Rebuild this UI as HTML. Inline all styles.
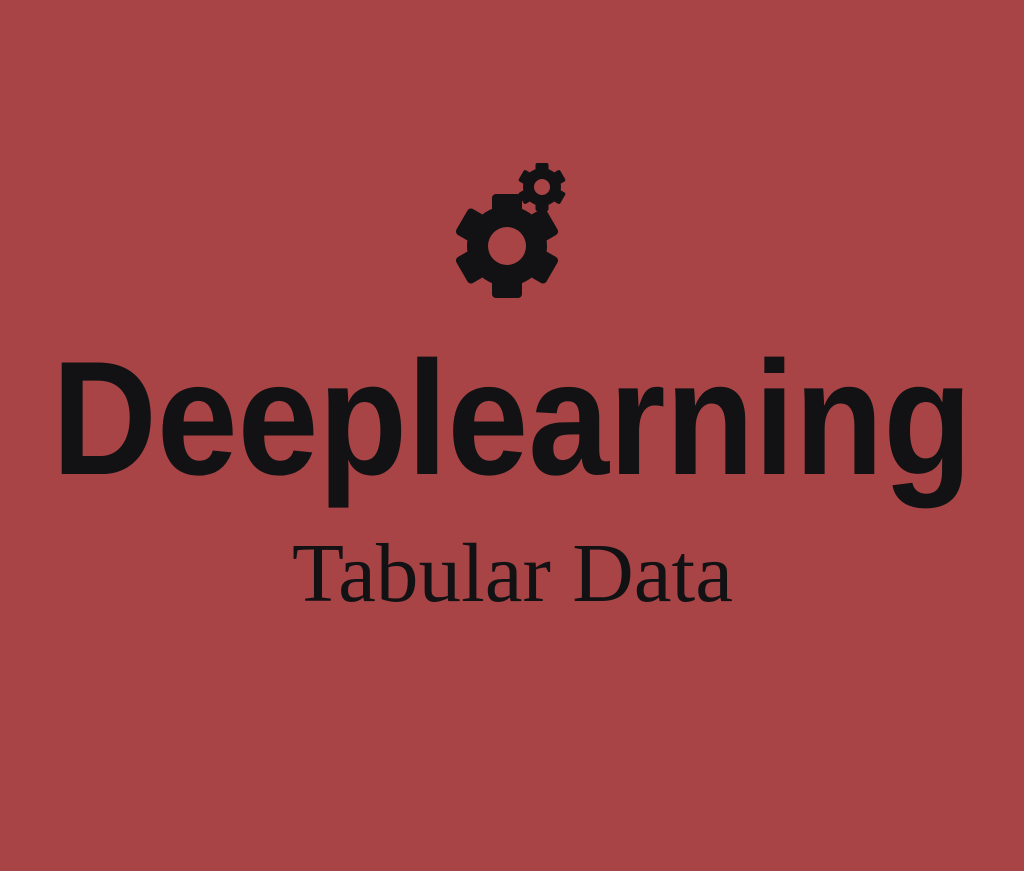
<!DOCTYPE html>
<html><head><meta charset="utf-8"><style>
html,body{margin:0;padding:0;background:#a84445;}
svg{display:block}
</style></head><body>
<svg width="1024" height="871" viewBox="0 0 1024 871" xmlns="http://www.w3.org/2000/svg">
<rect width="1024" height="871" fill="#a84445"/>
<g fill="#121214">
  <g transform="translate(507,246)">
    <circle r="40"/>
    <rect x="-15" y="-52" width="30" height="104" rx="4"/>
    <rect x="-15" y="-52" width="30" height="104" rx="4" transform="rotate(60)"/>
    <rect x="-15" y="-52" width="30" height="104" rx="4" transform="rotate(120)"/>
  </g>
  <g transform="translate(542,187)">
    <circle r="19"/>
    <rect x="-6.5" y="-24" width="13" height="48" rx="2"/>
    <rect x="-6.5" y="-24" width="13" height="48" rx="2" transform="rotate(60)"/>
    <rect x="-6.5" y="-24" width="13" height="48" rx="2" transform="rotate(120)"/>
  </g>
</g>
<circle cx="507" cy="246" r="19" fill="#a84445"/>
<circle cx="542" cy="187" r="8" fill="#a84445"/>
<text x="52" y="474" font-family="Liberation Sans, sans-serif" font-weight="bold" font-size="162" fill="#121214" textLength="920" lengthAdjust="spacingAndGlyphs">Deeplearning</text>
<text x="292" y="601" font-family="Liberation Serif, serif" font-size="84" fill="#121214" textLength="441" lengthAdjust="spacingAndGlyphs">Tabular Data</text>
</svg>
</body></html>
